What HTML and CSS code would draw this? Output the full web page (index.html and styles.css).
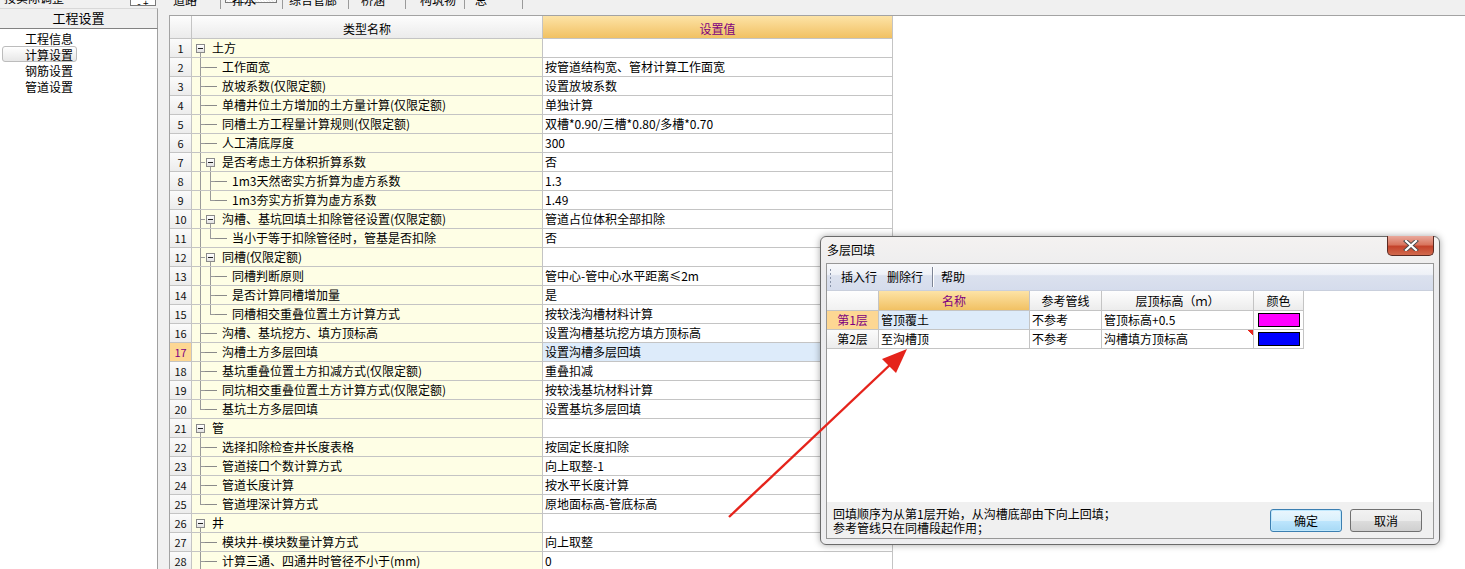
FILE: index.html
```html
<!DOCTYPE html>
<html lang="zh-CN">
<head>
<meta charset="utf-8">
<title>工程设置</title>
<link rel="stylesheet" href="styles.css">
</head>
<body>
<div class="app">
  <aside class="left">
    <div class="left-top"><span class="cut">按实际调整</span><span class="mini">- +</span></div>
    <div class="left-head">工程设置</div>
    <ul class="left-list">
      <li><span class="it">工程信息</span></li>
      <li><span class="it sel">计算设置</span></li>
      <li><span class="it">钢筋设置</span></li>
      <li><span class="it">管道设置</span></li>
    </ul>
  </aside>
  <main class="main">
    <div class="tabs">
      <span class="tab t1"><b>道路</b></span>
      <span class="tab t2"><span class="pressed"><b>排水</b></span></span>
      <span class="tab t3"><b>综合管廊</b></span>
      <span class="tab t4"><b>桥涵</b></span>
      <span class="tab t5"><b>构筑物</b></span>
      <span class="tab t6"><b>总</b></span>
    </div>
    <div class="gridwrap">
      <div class="row head">
        <div class="c num"></div>
        <div class="c name hname">类型名称</div>
        <div class="c val hval">设置值</div>
      </div>
      <div class="row"><div class="c num">1</div><div class="c name"><i class="g g-box"><b class="box"></b></i><span class="tx">土方</span></div><div class="c val"></div></div>
      <div class="row"><div class="c num">2</div><div class="c name"><i class="g g-t"></i><i class="stub"></i>工作面宽</div><div class="c val">按管道结构宽、管材计算工作面宽</div></div>
      <div class="row"><div class="c num">3</div><div class="c name"><i class="g g-t"></i><i class="stub"></i>放坡系数(仅限定额)</div><div class="c val">设置放坡系数</div></div>
      <div class="row"><div class="c num">4</div><div class="c name"><i class="g g-t"></i><i class="stub"></i>单槽井位土方增加的土方量计算(仅限定额)</div><div class="c val">单独计算</div></div>
      <div class="row"><div class="c num">5</div><div class="c name"><i class="g g-t"></i><i class="stub"></i>同槽土方工程量计算规则(仅限定额)</div><div class="c val">双槽*0.90/三槽*0.80/多槽*0.70</div></div>
      <div class="row"><div class="c num">6</div><div class="c name"><i class="g g-t"></i><i class="stub"></i>人工清底厚度</div><div class="c val">300</div></div>
      <div class="row"><div class="c num">7</div><div class="c name"><i class="g g-t"></i><i class="g g-box"><b class="box"></b></i><span class="tx">是否考虑土方体积折算系数</span></div><div class="c val">否</div></div>
      <div class="row"><div class="c num">8</div><div class="c name"><i class="g g-v"></i><i class="g g-t"></i><i class="stub"></i>1m3天然密实方折算为虚方系数</div><div class="c val">1.3</div></div>
      <div class="row"><div class="c num">9</div><div class="c name"><i class="g g-v"></i><i class="g g-l"></i><i class="stub"></i>1m3夯实方折算为虚方系数</div><div class="c val">1.49</div></div>
      <div class="row"><div class="c num">10</div><div class="c name"><i class="g g-t"></i><i class="g g-box"><b class="box"></b></i><span class="tx">沟槽、基坑回填土扣除管径设置(仅限定额)</span></div><div class="c val">管道占位体积全部扣除</div></div>
      <div class="row"><div class="c num">11</div><div class="c name"><i class="g g-v"></i><i class="g g-l"></i><i class="stub"></i>当小于等于扣除管径时，管基是否扣除</div><div class="c val">否</div></div>
      <div class="row"><div class="c num">12</div><div class="c name"><i class="g g-t"></i><i class="g g-box"><b class="box"></b></i><span class="tx">同槽(仅限定额)</span></div><div class="c val"></div></div>
      <div class="row"><div class="c num">13</div><div class="c name"><i class="g g-v"></i><i class="g g-t"></i><i class="stub"></i>同槽判断原则</div><div class="c val">管中心-管中心水平距离≤2m</div></div>
      <div class="row"><div class="c num">14</div><div class="c name"><i class="g g-v"></i><i class="g g-t"></i><i class="stub"></i>是否计算同槽增加量</div><div class="c val">是</div></div>
      <div class="row"><div class="c num">15</div><div class="c name"><i class="g g-v"></i><i class="g g-l"></i><i class="stub"></i>同槽相交重叠位置土方计算方式</div><div class="c val">按较浅沟槽材料计算</div></div>
      <div class="row"><div class="c num">16</div><div class="c name"><i class="g g-t"></i><i class="stub"></i>沟槽、基坑挖方、填方顶标高</div><div class="c val">设置沟槽基坑挖方填方顶标高</div></div>
      <div class="row cur"><div class="c num">17</div><div class="c name"><i class="g g-t"></i><i class="stub"></i>沟槽土方多层回填</div><div class="c val">设置沟槽多层回填</div></div>
      <div class="row"><div class="c num">18</div><div class="c name"><i class="g g-t"></i><i class="stub"></i>基坑重叠位置土方扣减方式(仅限定额)</div><div class="c val">重叠扣减</div></div>
      <div class="row"><div class="c num">19</div><div class="c name"><i class="g g-t"></i><i class="stub"></i>同坑相交重叠位置土方计算方式(仅限定额)</div><div class="c val">按较浅基坑材料计算</div></div>
      <div class="row"><div class="c num">20</div><div class="c name"><i class="g g-l"></i><i class="stub"></i>基坑土方多层回填</div><div class="c val">设置基坑多层回填</div></div>
      <div class="row"><div class="c num">21</div><div class="c name"><i class="g g-box"><b class="box"></b></i><span class="tx">管</span></div><div class="c val"></div></div>
      <div class="row"><div class="c num">22</div><div class="c name"><i class="g g-t"></i><i class="stub"></i>选择扣除检查井长度表格</div><div class="c val">按固定长度扣除</div></div>
      <div class="row"><div class="c num">23</div><div class="c name"><i class="g g-t"></i><i class="stub"></i>管道接口个数计算方式</div><div class="c val">向上取整-1</div></div>
      <div class="row"><div class="c num">24</div><div class="c name"><i class="g g-t"></i><i class="stub"></i>管道长度计算</div><div class="c val">按水平长度计算</div></div>
      <div class="row"><div class="c num">25</div><div class="c name"><i class="g g-l"></i><i class="stub"></i>管道埋深计算方式</div><div class="c val">原地面标高-管底标高</div></div>
      <div class="row"><div class="c num">26</div><div class="c name"><i class="g g-box"><b class="box"></b></i><span class="tx">井</span></div><div class="c val"></div></div>
      <div class="row"><div class="c num">27</div><div class="c name"><i class="g g-t"></i><i class="stub"></i>模块井-模块数量计算方式</div><div class="c val">向上取整</div></div>
      <div class="row"><div class="c num">28</div><div class="c name"><i class="g g-t"></i><i class="stub"></i>计算三通、四通井时管径不小于(mm)</div><div class="c val">0</div></div>
    </div>
  </main>
</div>

<div class="dialog">
  <div class="dlg-title">
    <span class="dlg-cap">多层回填</span>
    <span class="close"><svg width="18" height="11" viewBox="0 0 18 11"><path d="M4 1 L14 10 M14 1 L4 10" stroke="#4a4a4a" stroke-width="4" stroke-linecap="square"/><path d="M4 1 L14 10 M14 1 L4 10" stroke="#ffffff" stroke-width="2.2" stroke-linecap="square"/></svg></span>
  </div>
  <div class="dlg-body">
    <div class="toolbar">
      <span class="grip"></span>
      <span class="tb">插入行</span>
      <span class="tb">删除行</span>
      <span class="tb-sep"></span>
      <span class="tb">帮助</span>
    </div>
    <div class="dtable">
      <div class="drow dhead">
        <div class="dc rh"></div>
        <div class="dc ctr hl">名称</div>
        <div class="dc ctr">参考管线</div>
        <div class="dc ctr">层顶标高（ｍ）</div>
        <div class="dc ctr">颜色</div>
      </div>
      <div class="drow">
        <div class="dc rh rh-cur">第1层</div>
        <div class="dc blue">管顶覆土</div>
        <div class="dc">不参考</div>
        <div class="dc">管顶标高+0.5</div>
        <div class="dc"><span class="sw sw-m"></span></div>
      </div>
      <div class="drow">
        <div class="dc rh">第2层</div>
        <div class="dc">至沟槽顶</div>
        <div class="dc">不参考</div>
        <div class="dc mark">沟槽填方顶标高</div>
        <div class="dc"><span class="sw sw-b"></span></div>
      </div>
    </div>
    <div class="dlg-fill"></div>
    <div class="dlg-foot">
      <div class="msg">回填顺序为从第1层开始，从沟槽底部由下向上回填；<br>参考管线只在同槽段起作用；</div>
      <button class="btn def">确定</button>
      <button class="btn">取消</button>
    </div>
  </div>
</div>

<svg class="arrow" width="1465" height="569" viewBox="0 0 1465 569">
  <line x1="729" y1="517" x2="892" y2="363" stroke="#e5231b" stroke-width="2.4"/>
  <polygon points="907,349 882,359 896,373" fill="#e5231b"/>
</svg>
</body>
</html>
```
FILE: styles.css
```css
* { box-sizing: border-box; }
html, body { margin: 0; padding: 0; }
body {
  width: 1465px;
  height: 569px;
  overflow: hidden;
  position: relative;
  background: #f0f0f0;
  color: #000;
  font-family: "Noto Sans CJK SC", "Noto Sans", sans-serif;
  font-size: 12px;
  line-height: 18px;
}
.app { display: flex; height: 569px; overflow: hidden; }

/* left panel */
.left { width: 158px; flex: none; display: flex; flex-direction: column; }
.left-top { height: 8px; flex: none; overflow: hidden; display: flex; line-height: 12px; }
.left-top .cut { display: block; margin-top: -8px; padding-left: 4px; flex: 1; }
.left-top .mini { display: block; width: 26px; height: 6px; margin-right: 2px; border: 1px solid #7a7a7a; border-top: none; line-height: 6px; font-size: 10px; text-align: center; overflow: hidden; background: #fff; }
.left-head { height: 21px; flex: none; line-height: 18px; text-align: center; font-size: 13px; border-top: 1px solid #d8d8d8; border-bottom: 1px solid #828282; border-right: 1px solid #a0a0a0; background: #f0f0f0; }
.left-list { flex: 1; margin: 0; padding: 1px 0 0; list-style: none; background: #fff; border-right: 1px solid #a0a0a0; }
.left-list li { height: 16px; line-height: 16px; padding-left: 2px; }
.it { display: inline-block; padding: 0 3px 0 22px; height: 16px; line-height: 15px; border: 1px solid transparent; }
.it.sel { border-color: #bcbcbc; border-radius: 3px; background: linear-gradient(#ffffff, #e7e7e7); }

/* main area */
.main { flex: 1; display: flex; flex-direction: column; min-width: 0; min-height: 0; }
.tabs { height: 15px; flex: none; display: flex; line-height: 12px; overflow: hidden; }
.tab { display: block; height: 9px; overflow: hidden; border-right: 1px solid #9a9a9a; }
.tab b { display: block; margin-top: -6px; font-weight: normal; }
.t1 { width: 63px; padding-left: 15px; }
.t2 { width: 62px; padding-left: 4px; }
.t2 .pressed { display: block; width: 52px; height: 9px; padding-left: 6px; border: 1px solid #7a7a7a; border-top: none; background: repeating-linear-gradient(45deg, #ffffff 0 1px, #ececec 1px 2px); }
.t3 { width: 66px; padding-left: 6px; }
.t4 { width: 57px; padding-left: 12px; }
.t5 { width: 59px; padding-left: 14px; }
.t6 { width: 58px; padding-left: 10px; }

.gridwrap { flex: 1; min-height: 0; overflow: hidden; margin-left: 11px; background: #fff; border-top: 1px solid #a3a3a3; border-left: 1px solid #a3a3a3; }
.row { display: grid; grid-template-columns: 22px 351px 350px; height: 19px; }
.c { border-right: 1px solid #c4c4c4; border-bottom: 1px solid #c4c4c4; height: 19px; white-space: nowrap; overflow: hidden; display: flex; align-items: center; }
.num { justify-content: center; background: linear-gradient(#fbfbfb, #ececec); font-size: 11px; color: #111; }
.name { background: #fefee5; padding-left: 3px; }
.val { padding-left: 2px; background: #fff; }
.head { height: 23px; }
.head .c { height: 23px; justify-content: center; padding-top: 3px; }
.head .num, .hname { background: linear-gradient(#fdfdfd, #ebebeb); }
.hname { padding-left: 0; font-size: 12px; }
.hval { padding-left: 0; color: #800080; background: linear-gradient(#fde3a6, #f1c163); }
.cur .num { background: #fdd793; color: #800080; }
.cur .val { background: #ddebfa; }

/* tree guides */
.g { display: block; flex: none; width: 10px; height: 18px; }
.g-v { background: linear-gradient(#9a9a9a, #9a9a9a) 5px 0 / 1px 100% no-repeat; }
.g-t { background: linear-gradient(#9a9a9a, #9a9a9a) 5px 0 / 1px 100% no-repeat, linear-gradient(#9a9a9a, #9a9a9a) 5px 9px / 5px 1px no-repeat; }
.g-l { background: linear-gradient(#9a9a9a, #9a9a9a) 5px 0 / 1px 10px no-repeat, linear-gradient(#9a9a9a, #9a9a9a) 5px 9px / 5px 1px no-repeat; }
.g-box { background: linear-gradient(#9a9a9a, #9a9a9a) 5px 13px / 1px 5px no-repeat; padding-top: 5px; padding-left: 1px; }
.box { display: block; width: 9px; height: 9px; border: 1px solid #8a8a8a; background: linear-gradient(#222, #222) 50% 50% / 5px 1px no-repeat, linear-gradient(#ffffff, #e2e2e2); }
.stub { display: block; flex: none; width: 12px; height: 18px; margin-right: 5px; background: linear-gradient(#8a8a8a, #8a8a8a) 0 9px / 100% 1px no-repeat; }
.tx { margin-left: 7px; }

/* dialog */
.dialog {
  position: absolute;
  left: 820px;
  top: 236px;
  width: 620px;
  height: 309px;
  display: flex;
  flex-direction: column;
  border: 1px solid #6a6a6a;
  border-radius: 6px;
  background: linear-gradient(#f4f2f1, #ebebed 40px, #eeeef0);
  box-shadow: 0 0 7px rgba(0, 0, 0, 0.35);
}
.dlg-title { height: 26px; display: flex; align-items: flex-start; flex: none; }
.dlg-cap { padding-left: 6px; line-height: 26px; font-size: 12px; }
.close {
  margin-left: auto;
  margin-right: 5px;
  margin-top: -1px;
  width: 47px;
  height: 20px;
  display: flex;
  align-items: center;
  justify-content: center;
  border: 1px solid #5a2a22;
  border-top: none;
  border-radius: 0 0 5px 5px;
  background: linear-gradient(#e9a99c, #d9765f 45%, #c4432b 55%, #d16a4e);
}
.dlg-body { flex: 1; margin: 0 5px 5px; display: flex; flex-direction: column; background: #fff; border: 1px solid #979797; }
.toolbar { height: 27px; flex: none; display: flex; align-items: center; padding-left: 2px; border-bottom: 1px solid #c9cfdc; background: linear-gradient(#f7f8fb, #eef1f7 40%, #dbe1ee 45%, #d5dcec); }
.grip { width: 3px; height: 19px; margin-right: 9px; background: radial-gradient(circle, #8792a8 0.8px, transparent 1px) 0 0 / 3px 4px; }
.tb { margin-right: 10px; }
.tb-sep { width: 1px; height: 20px; background: #7d8494; margin: 0 8px 0 -1px; box-shadow: 1px 0 0 #fff; }
.dtable { flex: none; }
.drow { display: grid; grid-template-columns: 52px 151px 72px 152px 50px; height: 19px; }
.dhead { height: 20px; }
.dc { border-right: 1px solid #c4c4c4; border-bottom: 1px solid #c4c4c4; padding-left: 2px; white-space: nowrap; overflow: hidden; display: flex; align-items: center; }
.dc.ctr { justify-content: center; padding-left: 0; background: linear-gradient(#fefefe, #ececec); }
.dc.hl { color: #800080; background: linear-gradient(#fde3a6, #f1c163); }
.dc.rh { justify-content: center; padding-left: 0; background: linear-gradient(#fbfbfb, #ececec); }
.dhead .rh { background: linear-gradient(#fefefe, #f1f1f1); }
.dc.rh-cur { background: #fdd793; color: #800080; }
.dc.blue { background: #ddebfa; }
.dc.mark { background: linear-gradient(225deg, #e8261c 0 3.6px, transparent 3.7px) 100% 0 / 6px 6px no-repeat; }
.sw { display: block; width: 42px; height: 14px; margin-left: 2px; border: 1px solid #000; }
.sw-m { background: #ff00ff; }
.sw-b { background: #0000ff; }
.dlg-fill { flex: 1; }
.dlg-foot { height: 36px; flex: none; display: flex; align-items: center; background: #f0f0f0; padding-right: 11px; }
.msg { flex: 1; padding-left: 6px; padding-top: 2px; line-height: 14px; font-size: 12px; }
.btn {
  width: 72px;
  height: 23px;
  margin-left: 8px;
  font-family: inherit;
  font-size: 12px;
  color: #000;
  border: 1px solid #707070;
  border-radius: 3px;
  background: linear-gradient(#f2f2f2 0, #ebebeb 50%, #dddddd 51%, #cfcfcf 100%);
  padding: 0;
}
.btn.def {
  border-color: #3c7fb1;
  background: linear-gradient(#eaf6fd 0, #d9f0fc 50%, #bee6fd 51%, #a7d9f5 100%);
  box-shadow: inset 0 0 0 1px #bfe8fd;
}

.arrow { position: absolute; left: 0; top: 0; pointer-events: none; }
```
